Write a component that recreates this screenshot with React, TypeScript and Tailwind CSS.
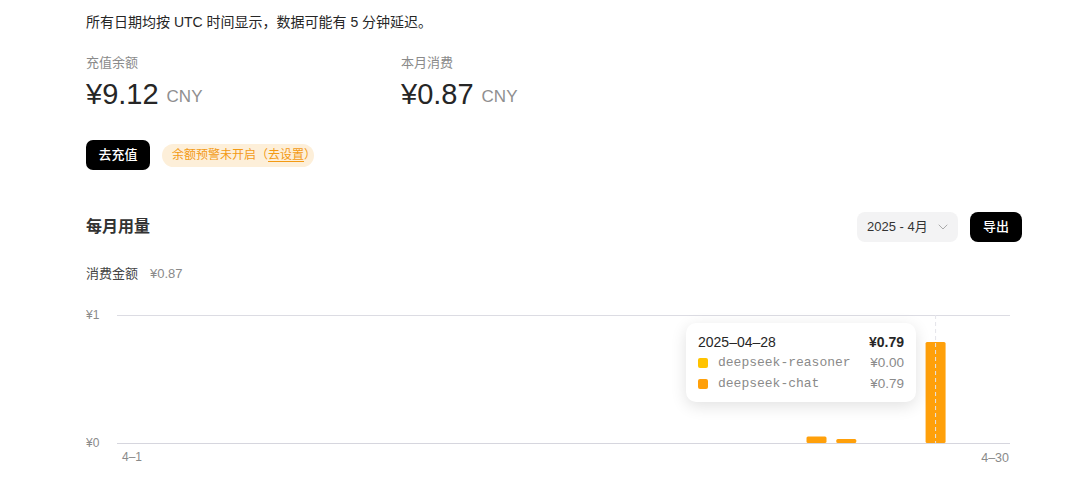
import { ChevronDown } from "lucide-react";

const days = 30;
const left = 31; // svg x of chart start (117 - 86)
const right = 924; // svg x of chart end (1010 - 86)
const top = 25;
const base = 153;
const step = (right - left) / days;

const usage: { day: number; value: number }[] = [
  { day: 24, value: 0.05 },
  { day: 25, value: 0.03 },
  { day: 28, value: 0.79 },
];

function UsageChart() {
  const hoverX = left + (28 - 0.5) * step;
  return (
    <div className="relative mt-[7px] h-[180px]">
      <svg width={936} height={180} className="block">
        <text x={0} y={top + 4} fontSize={12} fill="#8a8a8a" fontFamily="Liberation Sans, sans-serif">
          ¥1
        </text>
        <text x={0} y={base + 4} fontSize={12} fill="#8a8a8a" fontFamily="Liberation Sans, sans-serif">
          ¥0
        </text>
        <line x1={left} x2={right} y1={top + 0.5} y2={top + 0.5} stroke="#dcdce3" />
        <line x1={left} x2={right} y1={base + 0.5} y2={base + 0.5} stroke="#d6d6de" />
        {usage.map((u) => {
          const cx = left + (u.day - 0.5) * step;
          const h = Math.max(4, (base - top) * u.value);
          return (
            <rect key={u.day} x={cx - 10} y={base - h} width={20} height={h} rx={1.5} fill="#ffa00a" />
          );
        })}
        <line
          x1={hoverX}
          x2={hoverX}
          y1={top}
          y2={base}
          stroke="#e4e4ea"
          strokeDasharray="4 3"
        />
        <text x={36} y={171} fontSize={12} fill="#8a8a8a" fontFamily="Liberation Sans, sans-serif">
          4–1
        </text>
        <text x={923} y={172} fontSize={12.5} fill="#8a8a8a" textAnchor="end" fontFamily="Liberation Sans, sans-serif">
          4–30
        </text>
      </svg>

      {/* Tooltip */}
      <div className="absolute left-[600px] top-[33px] w-[230px] rounded-[10px] bg-white px-[12px] pt-[10px] pb-[9px] shadow-[0_4px_16px_rgba(0,0,0,0.12)]">
        <div className="flex items-center justify-between text-[14px] leading-[18px] text-[#262626]">
          <span>2025–04–28</span>
          <span className="font-bold">¥0.79</span>
        </div>
        <div className="mt-[3px] flex items-center justify-between text-[13px] leading-[18px] text-[#8a8a8a]">
          <span className="flex items-center">
            <span className="mr-[10px] h-[10px] w-[10px] rounded-[2px] bg-[#ffc300]" />
            <span className="font-['Liberation_Mono',monospace]">deepseek-reasoner</span>
          </span>
          <span className="text-[13.5px]">¥0.00</span>
        </div>
        <div className="mt-[3px] flex items-center justify-between text-[13px] leading-[18px] text-[#8a8a8a]">
          <span className="flex items-center">
            <span className="mr-[10px] h-[10px] w-[10px] rounded-[2px] bg-[#ffa00a]" />
            <span className="font-['Liberation_Mono',monospace]">deepseek-chat</span>
          </span>
          <span className="text-[13.5px]">¥0.79</span>
        </div>
      </div>
    </div>
  );
}

export default function App() {
  return (
    <div className="h-[483px] w-[1088px] overflow-hidden bg-white pl-[86px] font-['Liberation_Sans','Noto_Sans_CJK_SC',sans-serif] text-[#262626]">
      <div className="w-[936px]">
        <p className="pt-[12px] text-[14px] leading-[20px]">
          所有日期均按 UTC 时间显示，数据可能有 5 分钟延迟。
        </p>

        <div className="mt-[22px] flex">
          <div className="w-[315px]">
            <div className="text-[13px] leading-[18px] text-[#8a8a8a]">充值余额</div>
            <div className="mt-[4px] flex h-[36px] items-center">
              <span className="text-[29px] leading-[36px]">¥9.12</span>
              <span className="ml-[8px] mt-[5px] text-[17px] leading-[20px] text-[#8f8f8f]">CNY</span>
            </div>
          </div>
          <div>
            <div className="text-[13px] leading-[18px] text-[#8a8a8a]">本月消费</div>
            <div className="mt-[4px] flex h-[36px] items-center">
              <span className="text-[29px] leading-[36px]">¥0.87</span>
              <span className="ml-[8px] mt-[5px] text-[17px] leading-[20px] text-[#8f8f8f]">CNY</span>
            </div>
          </div>
        </div>

        <div className="mt-[28px] flex items-center gap-[12px]">
          <button className="h-[30px] w-[64px] rounded-[7px] bg-black text-[13px] font-medium text-white">
            去充值
          </button>
          <div className="flex h-[23px] w-[152px] items-center rounded-full bg-[#fdefd9] pl-[10px] text-[12px] leading-[23px] text-[#f39a14]">
            <span className="whitespace-nowrap">
              余额预警未开启（<span className="underline underline-offset-2">去设置</span>）
            </span>
          </div>
        </div>

        <div className="mt-[42px] flex h-[30px] items-center justify-between">
          <h2 className="text-[16px] font-bold text-[#333]">每月用量</h2>
          <div className="flex items-center gap-[12px]">
            <div className="flex h-[30px] w-[101px] items-center justify-between rounded-[8px] bg-[#f3f3f4] pl-[10px] pr-[7px] text-[13px] text-[#333]">
              <span>2025 - 4月</span>
              <ChevronDown className="h-[16px] w-[16px] text-[#aaa]" strokeWidth={1.5} />
            </div>
            <button className="h-[30px] w-[52px] rounded-[8px] bg-black text-[13px] font-medium text-white">
              导出
            </button>
          </div>
        </div>

        <div className="mt-[23px] flex items-center text-[13px] leading-[18px]">
          <span className="text-[#444]">消费金额</span>
          <span className="ml-[12px] text-[#8a8a8a]">¥0.87</span>
        </div>

        <UsageChart />
      </div>
    </div>
  );
}
